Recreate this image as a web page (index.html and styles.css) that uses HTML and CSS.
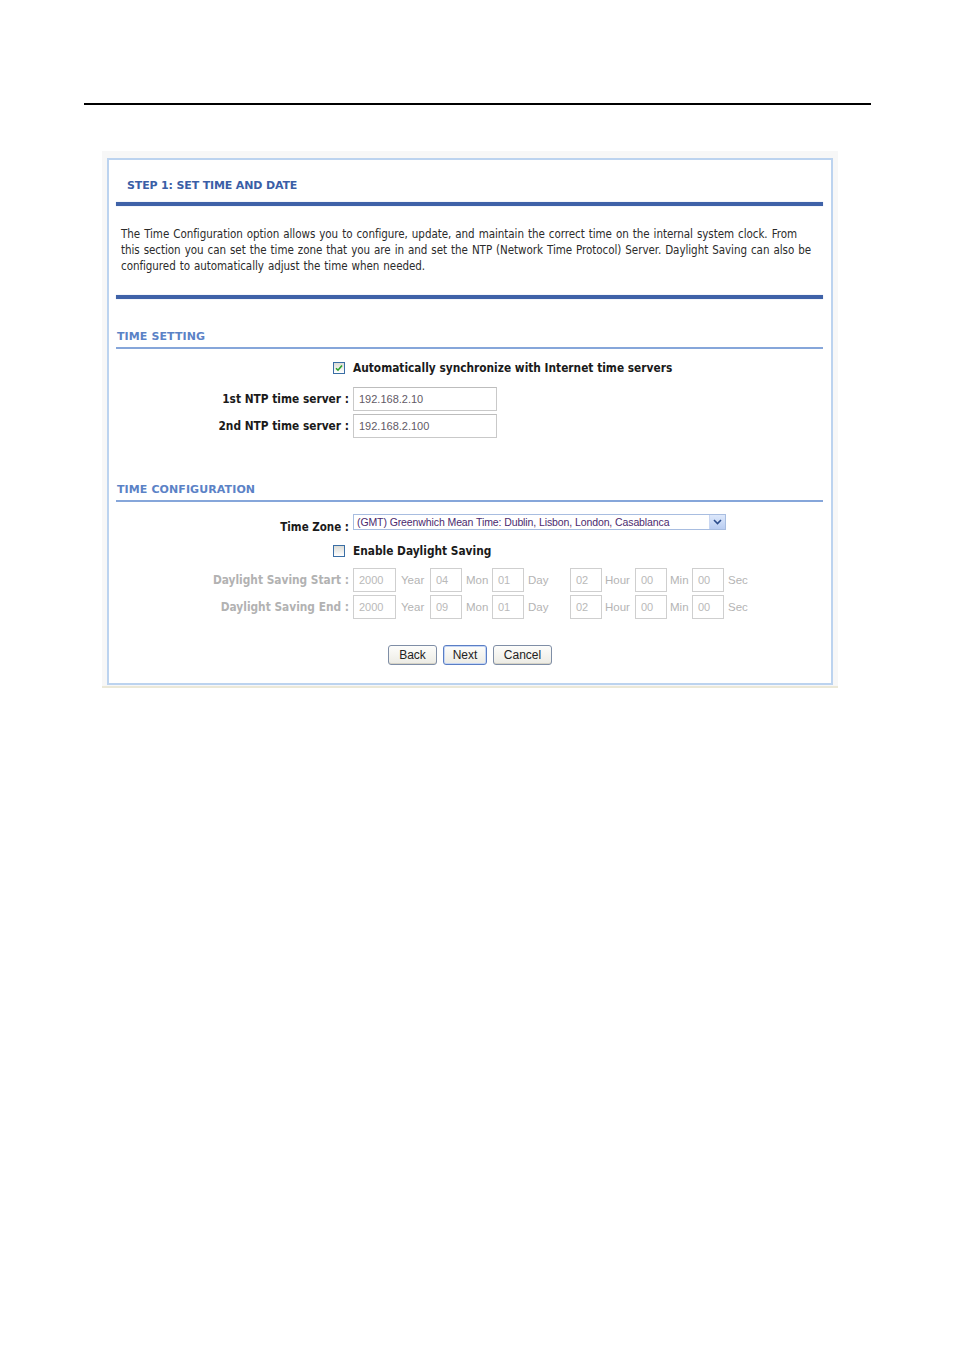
FILE: index.html
```html
<!DOCTYPE html>
<html>
<head>
<meta charset="utf-8">
<link rel="stylesheet" href="styles.css">
</head>
<body>
<div class="rule"></div>
<div class="frame">
  <div class="panel">
    <div class="title">STEP 1: SET TIME AND DATE</div>
    <div class="thick"></div>
    <p class="intro">The Time Configuration option allows you to configure, update, and maintain the correct time on the internal system clock. From this section you can set the time zone that you are in and set the NTP (Network Time Protocol) Server. Daylight Saving can also be configured to automatically adjust the time when needed.</p>
    <div class="thick thick2"></div>

    <div class="section">TIME SETTING</div>
    <div class="thin"></div>
    <div class="form">
      <div class="row chkrow">
        <div class="lab"><span class="chk on"><svg width="8" height="8" viewBox="0 0 8 8"><path d="M1 4.2 L3 6.2 L7 1.6" fill="none" stroke="#2aa02a" stroke-width="1.6"/></svg></span></div>
        <div class="val strong">Automatically synchronize with Internet time servers</div>
      </div>
      <div class="row inrow first">
        <div class="lab">1st NTP time server :</div>
        <div class="val"><span class="field">192.168.2.10</span></div>
      </div>
      <div class="row inrow">
        <div class="lab">2nd NTP time server :</div>
        <div class="val"><span class="field">192.168.2.100</span></div>
      </div>
    </div>

    <div class="section sec2">TIME CONFIGURATION</div>
    <div class="thin"></div>
    <div class="form">
      <div class="row tzrow">
        <div class="lab tzlab">Time Zone :</div>
        <div class="val"><span class="select"><span class="seltext">(GMT) Greenwhich Mean Time: Dublin, Lisbon, London, Casablanca</span><span class="arrow"><svg width="9" height="6" viewBox="0 0 9 6"><path d="M1 1 L4.5 4.5 L8 1" fill="none" stroke="#2b4c8c" stroke-width="1.6"/></svg></span></span></div>
      </div>
      <div class="row chkrow dsrow">
        <div class="lab"><span class="chk"></span></div>
        <div class="val strong">Enable Daylight Saving</div>
      </div>
      <div class="row inrow first2">
        <div class="lab dis">Daylight Saving Start :</div>
        <div class="val dsvals">
          <span class="box wide">2000</span><span class="unit u-year">Year</span>
          <span class="box">04</span><span class="unit u-mon">Mon</span>
          <span class="box">01</span><span class="unit u-day">Day</span>
          <span class="box">02</span><span class="unit u-hour">Hour</span>
          <span class="box">00</span><span class="unit u-min">Min</span>
          <span class="box">00</span><span class="unit u-sec">Sec</span>
        </div>
      </div>
      <div class="row inrow">
        <div class="lab dis">Daylight Saving End :</div>
        <div class="val dsvals">
          <span class="box wide">2000</span><span class="unit u-year">Year</span>
          <span class="box">09</span><span class="unit u-mon">Mon</span>
          <span class="box">01</span><span class="unit u-day">Day</span>
          <span class="box">02</span><span class="unit u-hour">Hour</span>
          <span class="box">00</span><span class="unit u-min">Min</span>
          <span class="box">00</span><span class="unit u-sec">Sec</span>
        </div>
      </div>
    </div>

    <div class="buttons">
      <button class="btn b-back">Back</button>
      <button class="btn b-next">Next</button>
      <button class="btn b-cancel">Cancel</button>
    </div>
  </div>
</div>
</body>
</html>
```

FILE: styles.css
```css
html, body {
  margin: 0;
  padding: 0;
  background: #ffffff;
}
body {
  font-family: "DejaVu Sans", Verdana, sans-serif;
  width: 954px;
  height: 1351px;
}
.rule {
  margin: 103px 0 0 84px;
  width: 787px;
  height: 2px;
  background: #000;
}
.frame {
  margin: 46px 0 0 102px;
  width: 726px;
  padding: 7px 5px 1px 5px;
  background: #f7f7f7;
  border-bottom: 2px solid #ebe8d8;
}
.panel {
  background: #fff;
  border: 2px solid #bcd3ef;
  padding: 0 8px 18px 7px;
}
.title {
  margin-left: 11px;
  padding-top: 19px;
  line-height: 14px;
  height: 14px;
  font-size: 11px;
  font-weight: bold;
  color: #3a5ea6;
  letter-spacing: -0.15px;
}
.thick {
  margin-top: 9px;
  height: 4px;
  background: #3f62a8;
  box-shadow: 0 0 1px #8ea6d2;
}
.thick2 {
  margin-top: 21px;
}
.intro {
  margin: 20px 0 0 5px;
  width: 698px;
  font-family: "DejaVu Sans Condensed", "DejaVu Sans", sans-serif;
  font-size: 11.5px;
  line-height: 16px;
  color: #2b2b2b;
  letter-spacing: -0.05px;
  word-spacing: 0.8px;
}
.section {
  margin: 31px 0 0 1px;
  line-height: 14px;
  height: 14px;
  font-family: "DejaVu Sans", sans-serif;
  font-size: 11px;
  font-weight: bold;
  color: #5b82c6;
  letter-spacing: 0.1px;
}
.sec2 {
  margin-top: 45px;
}
.thin {
  margin-top: 3px;
  height: 2px;
  background: #86a6da;
}
.form {
  display: flex;
  flex-direction: column;
}
.row {
  display: grid;
  grid-template-columns: 233px 1fr;
  column-gap: 4px;
  align-items: center;
}
.lab {
  text-align: right;
  font-family: "DejaVu Sans Condensed", "DejaVu Sans", sans-serif;
  font-size: 11.8px;
  font-weight: bold;
  color: #1a1a1a;
  white-space: nowrap;
}
.lab.dis {
  color: #b2b2b2;
}
.strong {
  font-family: "DejaVu Sans Condensed", "DejaVu Sans", sans-serif;
  font-size: 11.8px;
  font-weight: bold;
  color: #1a1a1a;
}
.chkrow {
  height: 20px;
  margin-top: 9px;
}
.chkrow .lab {
  display: flex;
  justify-content: flex-end;
  padding-right: 4px;
}
.chk {
  width: 10px;
  height: 10px;
  border: 1px solid #3a6ea5;
  background: linear-gradient(#dcdcd6, #ffffff);
  display: flex;
  align-items: center;
  justify-content: center;
}
.inrow {
  height: 24px;
  margin-top: 3px;
}
.inrow.first {
  margin-top: 9px;
}
.field {
  display: flex;
  align-items: center;
  box-sizing: border-box;
  width: 144px;
  height: 24px;
  border: 1px solid #c9c9c9;
  border-top-color: #bdbdbd;
  padding-left: 5px;
  font-family: "Liberation Sans", Arial, sans-serif;
  font-size: 11px;
  color: #625a66;
}
.tzrow {
  margin-top: 12px;
  height: 20px;
  align-items: start;
}
.tzlab {
  padding-top: 6px;
  line-height: 14px;
  font-size: 11.5px;
}
.select {
  display: flex;
  align-items: center;
  box-sizing: border-box;
  width: 373px;
  height: 16px;
  border: 1px solid #a8bde0;
  background: #fff;
}
.seltext {
  flex: 1;
  padding-left: 3px;
  font-family: "Liberation Sans", Arial, sans-serif;
  font-size: 10.5px;
  letter-spacing: -0.1px;
  color: #4b2a6e;
  white-space: nowrap;
  overflow: hidden;
}
.arrow {
  width: 15px;
  height: 14px;
  background: linear-gradient(#dde8fb, #b9cdf2);
  border-left: 1px solid #c9d7f2;
  display: flex;
  align-items: center;
  justify-content: center;
}
.dsrow {
  margin-top: 7px;
}
.inrow.first2 {
  margin-top: 7px;
}
.dsvals {
  display: flex;
  align-items: center;
}
.box {
  box-sizing: border-box;
  width: 32px;
  height: 24px;
  border: 1px solid #cfcfcf;
  padding-left: 5px;
  display: flex;
  align-items: center;
  font-family: "Liberation Sans", Arial, sans-serif;
  font-size: 11px;
  color: #b9b9b9;
}
.box.wide {
  width: 43px;
}
.unit {
  box-sizing: border-box;
  padding-left: 4px;
  font-family: "Liberation Sans", Arial, sans-serif;
  font-size: 11.5px;
  color: #b4b4b4;
  white-space: nowrap;
}
.u-year { width: 34px; padding-left: 5px; }
.u-mon { width: 30px; }
.u-day { width: 46px; }
.u-hour { width: 33px; padding-left: 3px; }
.u-min { width: 25px; padding-left: 3px; }
.u-sec { width: 30px; }
.buttons {
  margin-top: 26px;
  display: flex;
  justify-content: center;
  gap: 6px;
  padding-left: 1px;
}
.btn {
  height: 20px;
  padding: 0 6px;
  border: 1px solid #7f8ea6;
  border-radius: 3px;
  background: linear-gradient(#fdfdfb, #ecebe4);
  font-family: "Liberation Sans", Arial, sans-serif;
  font-size: 12px;
  color: #222;
  box-shadow: inset 0 -1px 0 #d6d3c6;
}
.b-back { width: 49px; }
.b-next { width: 44px; border-color: #5a7ec4; box-shadow: inset 0 0 0 1px #c4d5f5; }
.b-cancel { width: 59px; }
```
